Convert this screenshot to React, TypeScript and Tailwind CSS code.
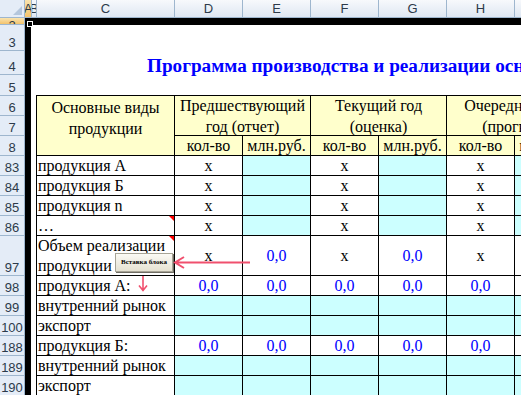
import type { ReactNode } from 'react'

const SERIF = "font-['Liberation_Serif','Times_New_Roman',serif]"
const SANS = "font-['Liberation_Sans',Arial,sans-serif]"

const COLS = [
  { label: 'A', w: 'w-[7px]', sel: true },
  { label: 'B', w: 'w-[5px]' },
  { label: 'C', w: 'w-[138px]' },
  { label: 'D', w: 'w-[68px]' },
  { label: 'E', w: 'w-[68px]' },
  { label: 'F', w: 'w-[68px]' },
  { label: 'G', w: 'w-[68px]' },
  { label: 'H', w: 'w-[68px]' },
  { label: 'I', w: 'w-[68px]' },
]

const ROWS = [
  { n: '2', h: 'h-[7px]', sel: true },
  { n: '3', h: 'h-[26px]' },
  { n: '4', h: 'h-[24px]' },
  { n: '5', h: 'h-[21px]' },
  { n: '6', h: 'h-[20px]' },
  { n: '7', h: 'h-[20px]' },
  { n: '8', h: 'h-[20px]' },
  { n: '83', h: 'h-[20px]' },
  { n: '84', h: 'h-[20px]' },
  { n: '85', h: 'h-[20px]' },
  { n: '86', h: 'h-[20px]' },
  { n: '97', h: 'h-[40px]' },
  { n: '98', h: 'h-[20px]' },
  { n: '99', h: 'h-[20px]' },
  { n: '100', h: 'h-[20px]' },
  { n: '188', h: 'h-[20px]' },
  { n: '189', h: 'h-[20px]' },
  { n: '190', h: 'h-[20px]' },
]

type Cell = { t?: string; cyan?: boolean; blue?: boolean }

const X: Cell = { t: 'x' }
const C: Cell = { cyan: true }
const Z: Cell = { t: '0,0', blue: true }
const E: Cell = {}

const qtyRow = [X, C, X, C, X, C]
const sumRow = [Z, Z, Z, Z, Z, E]
const fillRow = [C, C, C, C, C, C]

const BODY: { label: string; cells: Cell[]; note?: boolean; tall?: boolean }[] = [
  { label: 'продукция А', cells: qtyRow },
  { label: 'продукция Б', cells: qtyRow },
  { label: 'продукция n', cells: qtyRow },
  { label: '…', cells: qtyRow, note: true },
  { label: 'Объем реализации продукции', cells: [X, Z, X, Z, X, E], note: true, tall: true },
  { label: 'продукция А:', cells: sumRow },
  { label: 'внутренний рынок', cells: fillRow },
  { label: 'экспорт', cells: fillRow },
  { label: 'продукция Б:', cells: sumRow },
  { label: 'внутренний рынок', cells: fillRow },
  { label: 'экспорт', cells: fillRow },
]

function Head({ children, className = '' }: { children: ReactNode; className?: string }) {
  return (
    <div className={`flex items-center justify-center bg-[#ffffcc] text-center leading-[21px] ${className}`}>
      {children}
    </div>
  )
}

function NoteMark() {
  return (
    <span className="absolute right-0 top-0 h-0 w-0 border-l-[5px] border-t-[5px] border-l-transparent border-t-[#ff0000]" />
  )
}

export default function App() {
  return (
    <div className="relative h-[395px] w-[521px] overflow-hidden bg-white">
      {/* column headers */}
      <div className={`flex h-[18px] border-b border-[#9eb6ce] ${SANS} text-[13px] text-[#2c3a4a]`}>
        <div className="relative w-[25px] shrink-0 border-r border-[#9eb6ce] bg-[#e4ecf7]">
          <span className="absolute bottom-[2px] right-[2px] h-0 w-0 border-b-[9px] border-l-[9px] border-b-[#b4c6dc] border-l-transparent" />
        </div>
        {COLS.map((c) => (
          <div
            key={c.label}
            className={`flex shrink-0 items-center justify-center overflow-hidden border-r border-[#9eb6ce] ${c.w} ${
              c.sel
                ? 'bg-gradient-to-b from-[#f9e3ae] to-[#f3c36c]'
                : 'bg-gradient-to-b from-[#f7f9fc] to-[#dfe7f2]'
            }`}
          >
            {c.label}
          </div>
        ))}
      </div>

      <div className="flex">
        {/* row headers */}
        <div className={`w-[25px] shrink-0 border-r border-[#9eb6ce] ${SANS} text-[13px] text-[#2c3a4a]`}>
          {ROWS.map((r) => (
            <div
              key={r.n}
              className={`flex justify-center overflow-hidden border-b border-[#9eb6ce] leading-[15px] ${r.h} ${
                r.sel ? 'items-start bg-gradient-to-b from-[#f9e3ae] to-[#f3c36c]' : 'items-end bg-[#e4ecf7]'
              }`}
            >
              {r.n}
            </div>
          ))}
        </div>

        {/* column A (black) and B */}
        <div className="w-[6px] shrink-0 bg-black" />
        <div className="flex w-[490px] shrink-0 flex-col">
          <div className="-ml-[6px] h-[7px] bg-black" />
          <div className="flex h-[70px] flex-col">
            <div className="h-[26px]" />
            <div
              className={`h-[24px] whitespace-nowrap pl-[116px] pt-[3px] text-[19.2px] font-bold leading-[24px] text-[#0000ff] ${SERIF}`}
            >
              Программа производства и реализации основных видов продукции
            </div>
          </div>

          {/* table */}
          <div className="ml-[5px]">
            <div
              className={`grid w-max grid-cols-[137px_67px_67px_67px_67px_67px_67px] grid-rows-[19px_19px_19px_19px_19px_19px_19px_39px_19px_19px_19px_19px_19px_19px] gap-px bg-black pl-px pt-px text-[16px] text-black ${SERIF}`}
            >
              <div className="row-span-3 bg-[#ffffcc] pt-[1px] text-center leading-[21px]">
                Основные виды
                <br />
                продукции
              </div>
              <Head className="col-span-2 row-span-2">
                Предшествующий
                <br />
                год (отчет)
              </Head>
              <Head className="col-span-2 row-span-2">
                Текущий год
                <br />
                (оценка)
              </Head>
              <Head className="col-span-2 row-span-2">
                Очередной год
                <br />
                (прогноз)
              </Head>
              {['кол-во', 'млн.руб.', 'кол-во', 'млн.руб.', 'кол-во', 'млн.руб.'].map((t, i) => (
                <Head key={i} className="whitespace-nowrap leading-[19px]">
                  {t}
                </Head>
              ))}

              {BODY.map((row, ri) => (
                <Row key={ri} {...row} />
              ))}
            </div>
          </div>
        </div>
      </div>

      {/* selection fill handle on A2 */}
      <div className="absolute left-[27px] top-[21px] h-[6px] w-[6px] border border-white bg-black" />

      {/* form button */}
      <div className="absolute left-[115px] top-[253px] flex h-[19px] w-[58px] items-center justify-center border border-[#a7a496] bg-gradient-to-b from-[#fbfaf5] to-[#e6e2d2] shadow-[1px_1px_0_#6f6d64]">
        <span className={`whitespace-nowrap text-[7px] font-bold leading-none text-black ${SERIF}`}>
          Вставка блока
        </span>
      </div>

      {/* annotation arrows */}
      <svg className="absolute left-[172px] top-[255px]" width="80" height="16" viewBox="0 0 80 16" fill="none">
        <path d="M3 7.5H78M12 2L3 7.5L12 13" stroke="#f0506e" strokeWidth="2" />
      </svg>
      <svg className="absolute left-[137px] top-[274px]" width="12" height="20" viewBox="0 0 12 20" fill="none">
        <path d="M6 2V16M2 11.5L6 16.5L10 11.5" stroke="#f0506e" strokeWidth="1.6" />
      </svg>
    </div>
  )
}

function Row({ label, cells, note, tall }: { label: string; cells: Cell[]; note?: boolean; tall?: boolean }) {
  return (
    <>
      <div className={`relative flex items-center bg-white pl-px ${tall ? 'leading-[20px]' : 'whitespace-nowrap leading-[19px]'}`}>
        <span>
          {tall ? (
            <>
              Объем реализации
              <br />
              продукции
            </>
          ) : (
            label
          )}
        </span>
        {note && <NoteMark />}
      </div>
      {cells.map((c, i) => (
        <div
          key={i}
          className={`flex items-center justify-center leading-[19px] ${c.cyan ? 'bg-[#ccffff]' : 'bg-white'} ${
            c.blue ? 'text-[#0000ff]' : ''
          }`}
        >
          {c.t}
        </div>
      ))}
    </>
  )
}
